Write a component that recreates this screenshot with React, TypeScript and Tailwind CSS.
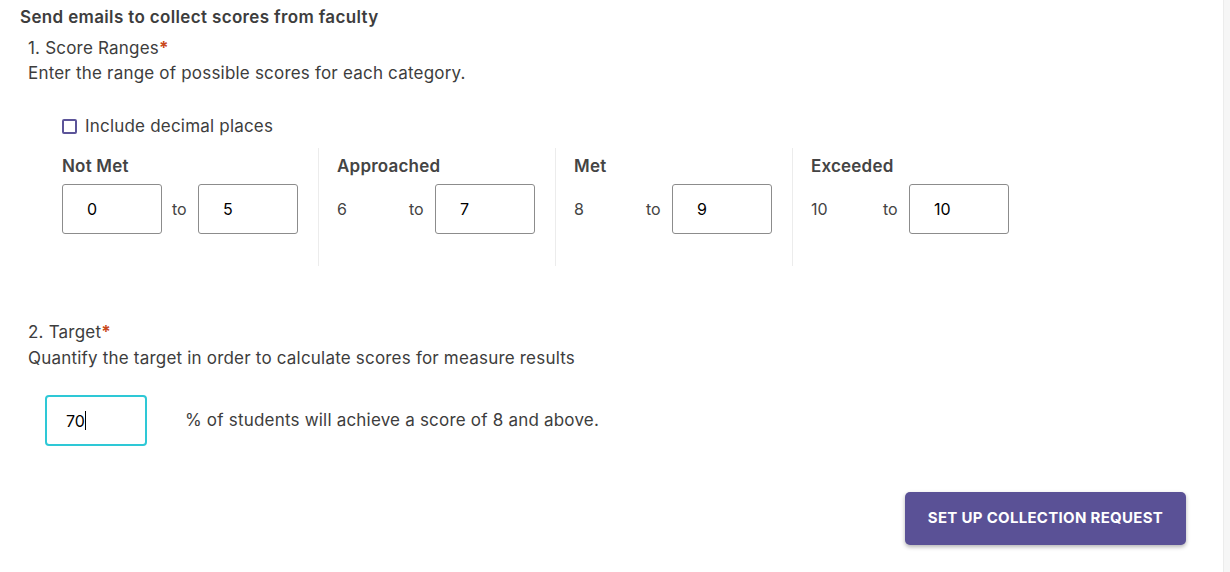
const font = { fontFamily: 'Inter, "Liberation Sans", sans-serif' };

interface RangeColumn {
    label: string;
    from: string;
    to: string;
    editableFrom?: boolean;
}

const columns: RangeColumn[] = [
    { label: 'Not Met', from: '0', to: '5', editableFrom: true },
    { label: 'Approached', from: '6', to: '7' },
    { label: 'Met', from: '8', to: '9' },
    { label: 'Exceeded', from: '10', to: '10' },
];

function Required() {
    return <span className="text-[#c9491c] font-bold">*</span>;
}

function ScoreBox({ value }: { value: string }) {
    return (
        <div className="w-[100px] h-[50px] shrink-0 border border-[#8c8c8c] rounded-[3px] flex items-center pl-[24px] text-[16px] text-black">
            {value}
        </div>
    );
}

function RangeCol({ col, first }: { col: RangeColumn; first: boolean }) {
    return (
        <div
            className={
                first
                    ? 'pl-[19px] pr-[20px] pt-[8px] h-[118px]'
                    : 'pl-[18px] pr-[20px] pt-[8px] h-[118px] border-l border-[#ececec]'
            }
        >
            <div className="text-[17px] tracking-[0.2px] font-semibold text-[#444] leading-[20px]">{col.label}</div>
            <div className="flex items-center mt-[8px]">
                {col.editableFrom ? (
                    <ScoreBox value={col.from} />
                ) : (
                    <div className="w-[62px] shrink-0 text-[16px] text-[#444]">{col.from}</div>
                )}
                <span className="w-[16px] shrink-0 mx-[10px] text-[16px] text-[#444]">to</span>
                <ScoreBox value={col.to} />
            </div>
        </div>
    );
}

export default function App() {
    return (
        <div className="w-[1230px] h-[572px] bg-white flex overflow-hidden" style={font}>
            <div className="flex-1 relative">
                <div className="pl-[20px] pt-[7px] text-[17px] tracking-[0.35px] font-semibold text-[#3d3d3d] leading-[20px]">
                    Send emails to collect scores from faculty
                </div>

                {/* Score ranges */}
                <div className="pl-[28px] mt-[9px] text-[17px] tracking-[0.2px] text-[#3d3d3d] leading-[25px]">
                    <div>
                        1. Score Ranges
                        <Required />
                    </div>
                    <div>Enter the range of possible scores for each category.</div>
                </div>

                <label className="flex items-center ml-[62px] mt-[30px] text-[17px] tracking-[0.2px] text-[#3d3d3d] leading-[20px]">
                    <span className="w-[15px] h-[15px] border-2 border-[#5c5499] rounded-[2px] mr-[8px]" />
                    Include decimal places
                </label>

                <div className="flex ml-[43px] mt-[12px]">
                    {columns.map((c, i) => (
                        <RangeCol key={c.label} col={c} first={i === 0} />
                    ))}
                </div>

                {/* Target */}
                <div className="pl-[28px] mt-[53px] text-[17px] tracking-[0.2px] text-[#3d3d3d] leading-[26px]">
                    <div>
                        2. Target
                        <Required />
                    </div>
                    <div>Quantify the target in order to calculate scores for measure results</div>
                </div>

                <div className="flex items-center ml-[45px] mt-[24px]">
                    <div className="w-[102px] h-[51px] border-2 border-[#2ec8d6] rounded-[4px] flex items-center pl-[19px] text-[16px] text-black">
                        70<span className="w-px h-[19px] bg-black" />
                    </div>
                    <span className="ml-[38px] text-[17px] tracking-[0.2px] text-[#3d3d3d]">
                        % of students will achieve a score of 8 and above.
                    </span>
                </div>

                <div className="flex justify-end pr-[37px] mt-[46px]">
                    <button className="w-[281px] h-[53px] bg-[#5a5196] rounded-[5px] shadow-[0_2px_4px_rgba(0,0,0,0.3)] text-white text-[15px] font-bold tracking-[0.3px]">
                        SET UP COLLECTION REQUEST
                    </button>
                </div>
            </div>
            <div className="w-[7px] h-full bg-[#f6f6f6] border-l border-[#ececec]" />
        </div>
    );
}
